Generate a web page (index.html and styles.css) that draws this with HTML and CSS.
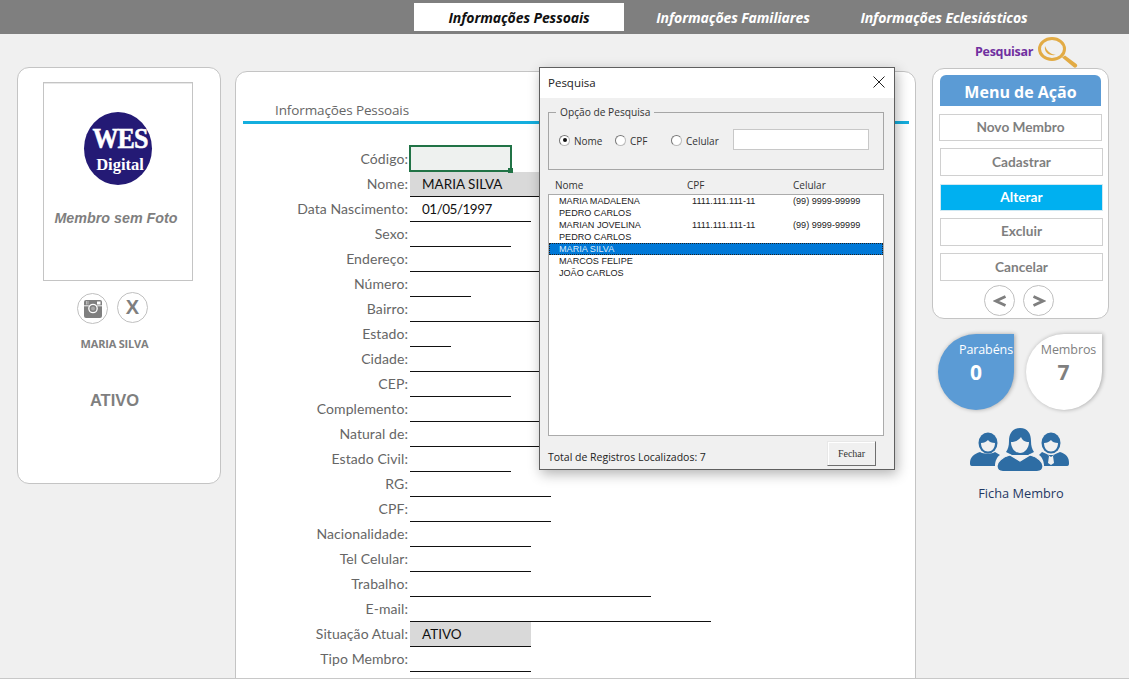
FILE: index.html
```html
<!DOCTYPE html>
<html lang="pt-BR">
<head>
<meta charset="utf-8">
<title>Cadastro de Membros</title>
<link rel="stylesheet" href="styles.css">
</head>
<body>
<div class="app">
  <nav class="topbar">
    <a class="tab tab-a active">Informações Pessoais</a>
    <a class="tab tab-b">Informações Familiares</a>
    <a class="tab tab-c">Informações Eclesiásticos</a>
  </nav>
  <main class="content">
    <aside class="profile card">
      <div class="photo">
        <div class="logo"><span class="logo-wes">WES</span><span class="logo-digital">Digital</span></div>
        <div class="nophoto">Membro sem Foto</div>
      </div>
      <div class="photo-actions">
        <button class="circle"><svg width="20" height="20" viewBox="0 0 20 20"><rect x="1" y="1" width="18" height="18" rx="2" fill="#7f7f7f"/><path d="M1 6.800h4.800M14.200 6.800H19" stroke="#fff" stroke-width=".9"/><rect x="14" y="2.500" width="3.500" height="3" fill="#fff"/><path d="M3.500 2v3.500M5 2v3.500" stroke="#fff" stroke-width=".5"/><circle cx="10" cy="9.500" r="4.200" fill="#7f7f7f" stroke="#fff" stroke-width="1.300"/><circle cx="10" cy="9.500" r="2" fill="#a8a8a8"/></svg></button>
        <button class="circle circle-x">X</button>
      </div>
      <div class="pname">MARIA SILVA</div>
      <div class="pstatus">ATIVO</div>
    </aside>

    <section class="sheet card">
      <h2 class="sheet-title">Informações Pessoais</h2>
      <div class="form">
        <div class="row"><span class="lab">Código:</span><span class="val selected"></span></div>
        <div class="row"><span class="lab">Nome:</span><span class="val wl fill">MARIA SILVA</span></div>
        <div class="row"><span class="lab">Data Nascimento:</span><span class="val w121 date">01/05/1997</span></div>
        <div class="row"><span class="lab">Sexo:</span><span class="val w101"></span></div>
        <div class="row"><span class="lab">Endereço:</span><span class="val wl"></span></div>
        <div class="row"><span class="lab">Número:</span><span class="val w61"></span></div>
        <div class="row"><span class="lab">Bairro:</span><span class="val wl"></span></div>
        <div class="row"><span class="lab">Estado:</span><span class="val w41"></span></div>
        <div class="row"><span class="lab">Cidade:</span><span class="val wl"></span></div>
        <div class="row"><span class="lab">CEP:</span><span class="val w101"></span></div>
        <div class="row"><span class="lab">Complemento:</span><span class="val wl"></span></div>
        <div class="row"><span class="lab">Natural de:</span><span class="val wl"></span></div>
        <div class="row"><span class="lab">Estado Civil:</span><span class="val w101"></span></div>
        <div class="row"><span class="lab">RG:</span><span class="val w141"></span></div>
        <div class="row"><span class="lab">CPF:</span><span class="val w141"></span></div>
        <div class="row"><span class="lab">Nacionalidade:</span><span class="val w121"></span></div>
        <div class="row"><span class="lab">Tel Celular:</span><span class="val w121"></span></div>
        <div class="row"><span class="lab">Trabalho:</span><span class="val w241"></span></div>
        <div class="row"><span class="lab">E-mail:</span><span class="val w301"></span></div>
        <div class="row"><span class="lab">Situação Atual:</span><span class="val w121 fill">ATIVO</span></div>
        <div class="row"><span class="lab">Tipo Membro:</span><span class="val w121"></span></div>
      </div>
    </section>

    <aside class="side">
      <div class="search">
        <span class="search-label">Pesquisar</span>
        <svg width="40" height="32" viewBox="0 0 40 32"><ellipse cx="14" cy="13" rx="12.500" ry="10.500" fill="none" stroke="#e2ab45" stroke-width="3"/><path d="M7 10c-1 6 3 10 11 9-6-1-9-4-11-9z" fill="#e2ab45"/><path d="M24 21.500l3-2 11.500 8.500a2 2 0 0 1-3 3z" fill="#e2ab45"/></svg>
      </div>
      <div class="menu card">
        <div class="menu-head">Menu de Ação</div>
        <button class="mbtn mbtn-first">Novo Membro</button>
        <button class="mbtn mbtn-tall">Cadastrar</button>
        <button class="mbtn mbtn-on">Alterar</button>
        <button class="mbtn mbtn-tall mbtn-up">Excluir</button>
        <button class="mbtn mbtn-tall">Cancelar</button>
        <div class="nav">
          <button class="circle"><svg width="14" height="12" viewBox="0 0 14 12"><path d="M12.500 1.500 3 6l9.500 4.500" fill="none" stroke="#7f7f7f" stroke-width="2.800"/></svg></button>
          <button class="circle"><svg width="14" height="12" viewBox="0 0 14 12"><path d="M1.500 1.500 11 6l-9.500 4.500" fill="none" stroke="#7f7f7f" stroke-width="2.800"/></svg></button>
        </div>
      </div>
      <div class="bubbles">
        <div class="bubble bubble-blue"><span class="b-label">Parabéns</span><span class="b-num">0</span></div>
        <div class="bubble bubble-white"><span class="b-label">Membros</span><span class="b-num">7</span></div>
      </div>
      <div class="people">
        <svg width="100" height="44" viewBox="0 0 100 44">
          <g fill="#2e6da4">
            <ellipse cx="18" cy="15" rx="9.500" ry="10.500"/>
            <path fill="#f0f0f0" d="M11 15c3 0 5-1 7-3 1 2 4 3 7 3 0 5-3 8.500-7 8.500s-7-3.500-7-8.500z"/>
            <path d="M2 38c-2 0-2-2-2-3 0-6 4-9 10-11 3 2 12 2 15 0l5 3c-3 2-5 6-5 11z"/>
            <ellipse cx="81" cy="15" rx="9.500" ry="10.500"/>
            <path fill="#f0f0f0" d="M74 15c3 0 5-1 7-3 1 2 4 3 7 3 0 5-3 8.500-7 8.500s-7-3.500-7-8.500z"/>
            <path d="M72 24l7 3 2 0 2 0 7-3c6 2 9 5 9 11 0 1 0 3-2 3H74c0-5-2-9-5-11z"/>
            <path fill="#f0f0f0" d="M76 25.500l5 3.500 5-3.500-3 2.500 1 7-3 2-3-2 1-7z"/>
            <path d="M50 0c8 0 11 6 11 13 0 5 1 8 3 11l-6 3H42l-6-3c2-3 3-6 3-11 0-7 3-13 11-13z"/>
            <path fill="#f0f0f0" d="M41 14c4 0 8-2 10-5 1 3 4 5 8 5 0 6-4 11-9 11s-9-5-9-11z"/>
            <path stroke="#f0f0f0" stroke-width="1.200" d="M40 27l10 6 10-6c8 2 13 7 13 11 0 3-2 5.500-6 5.500H33c-4 0-6-2.500-6-5.500 0-4 5-9 13-11z"/>
          </g>
        </svg>
        <span class="people-label">Ficha Membro</span>
      </div>
    </aside>
  </main>

  <div class="dialog">
    <header class="dlg-title">
      <span>Pesquisa</span>
      <svg width="12" height="12" viewBox="0 0 12 12"><path d="M.5.5l11 11M11.500.5l-11 11" stroke="#222" stroke-width="1" fill="none"/></svg>
    </header>
    <div class="dlg-body">
      <fieldset class="group">
        <legend>Opção de Pesquisa</legend>
        <div class="opts">
          <span class="opt opt-nome"><i class="radio on"></i>Nome</span>
          <span class="opt opt-cpf"><i class="radio"></i>CPF</span>
          <span class="opt opt-cel"><i class="radio"></i>Celular</span>
          <span class="textbox"></span>
        </div>
      </fieldset>
      <div class="list-head"><span class="c1">Nome</span><span class="c2">CPF</span><span class="c3">Celular</span></div>
      <div class="list">
        <div class="item"><span class="i1">MARIA MADALENA</span><span class="i2">1111.111.111-11</span><span>(99) 9999-99999</span></div>
        <div class="item"><span class="i1">PEDRO CARLOS</span></div>
        <div class="item"><span class="i1">MARIAN JOVELINA</span><span class="i2">1111.111.111-11</span><span>(99) 9999-99999</span></div>
        <div class="item"><span class="i1">PEDRO CARLOS</span></div>
        <div class="item sel"><span class="i1">MARIA SILVA</span></div>
        <div class="item"><span class="i1">MARCOS FELIPE</span></div>
        <div class="item"><span class="i1">JOÃO CARLOS</span></div>
      </div>
      <footer class="dlg-foot">
        <span class="total">Total de Registros Localizados: 7</span>
        <button class="fechar">Fechar</button>
      </footer>
    </div>
  </div>
</div>
</body>
</html>
```

FILE: styles.css
```css
* { box-sizing: border-box; }
html, body { margin: 0; padding: 0; height: 681px; overflow: hidden; background: #fff; }
button { font: inherit; padding: 0; cursor: default; }

.app { position: relative; height: 679px; background: #f0f0f0; border-bottom: 1px solid #c8c8c8; overflow: hidden; font-family: "Lato", "Liberation Sans", sans-serif; }

.topbar { height: 34px; background: #7f7f7f; display: flex; align-items: center; padding-left: 414px; }
.tab { height: 28px; padding-top: 1px; display: flex; align-items: center; justify-content: center; font: italic 700 14px "Open Sans", sans-serif; color: #fff; letter-spacing: -.1px; }
.tab-a { width: 210px; }
.tab-b { width: 218px; }
.tab-c { width: 204px; }
.tab.active { background: #fff; color: #111; }

.content { display: flex; align-items: flex-start; padding-left: 17px; }
.card { background: #fff; border: 1px solid #c4c4c4; border-radius: 12px; }

.profile { width: 204px; height: 417px; margin-top: 33px; display: flex; flex-direction: column; padding-top: 14px; }
.photo { width: 150px; height: 199px; margin-left: 25px; border: 1px solid #c4c4c4; box-shadow: inset 0 1px 0 #e8e8e8; display: flex; flex-direction: column; align-items: center; padding-top: 29px; }
.logo { width: 68px; height: 73px; margin-right: 1px; padding: 14px 0 0 5px; border-radius: 50%; background: #241a75; color: #fff; font-family: "Liberation Serif", serif; font-weight: 700; display: flex; flex-direction: column; align-items: center; line-height: 1; }
.logo-wes { font-size: 26px; height: 29px; letter-spacing: -1px; -webkit-text-stroke: .5px #fff; transform: scaleY(1.12); }
.logo-digital { font-size: 16.500px; margin-top: 2px; }
.nophoto { margin: 25px 4px 0 0; font: italic 700 14.300px "Liberation Sans", sans-serif; color: #7f7f7f; }

.photo-actions { display: flex; gap: 9px; margin: 12px 0 0 59px; }
.circle { width: 31px; height: 31px; border: 1px solid #c0c0c0; border-radius: 50%; background: #fff; display: flex; align-items: center; justify-content: center; color: #7f7f7f; }
.circle-x { font: 700 20px "Liberation Sans", sans-serif; margin-top: -1px; }
.pname { margin-top: 13px; width: 193px; text-align: center; font: 700 11px "Open Sans", sans-serif; color: #7f7f7f; letter-spacing: -.2px; line-height: 14px; }
.pstatus { margin-top: 40px; width: 193px; text-align: center; font: 700 16.500px "Liberation Sans", sans-serif; color: #7f7f7f; line-height: 18px; }

.sheet { width: 681px; height: 660px; margin: 37px 0 0 14px; padding: 0; position: relative; }
.sheet-title { margin: 30px 0 0 7px; padding: 0 0 0 32px; width: 666px; height: 22px; border-bottom: 3px solid #14aede; font: 400 13.500px/17px "Open Sans", sans-serif; color: #666; letter-spacing: -.12px; }
.form { margin-top: 23px; display: flex; flex-direction: column; }
.row { height: 25px; display: flex; align-items: stretch; }
.lab { width: 172px; text-align: right; font: 400 14px/23px "Lato", sans-serif; color: #666; letter-spacing: .08px; }
.val { margin-left: 2px; height: 25px; border-bottom: 1px solid #111; padding-left: 12px; font: 400 13.500px/24px "Lato", sans-serif; color: #111; }
.date { letter-spacing: -.5px; }
.selected { width: 103px; height: 27px; margin-left: 1px; margin-top: -2px; background: #eef1ef; border: 2px solid #217346; position: relative; }
.selected::after { content: ""; position: absolute; right: -3px; bottom: -3px; width: 5px; height: 5px; background: #217346; }
.fill { background: #d9d9d9; }
.wl { width: 300px; }
.w41 { width: 41px; }
.w61 { width: 61px; }
.w101 { width: 101px; }
.w121 { width: 121px; }
.w141 { width: 141px; }
.w241 { width: 241px; }
.w301 { width: 301px; }

.side { width: 177px; margin-left: 16px; display: flex; flex-direction: column; }
.search { height: 34px; display: flex; align-items: flex-start; padding: 2px 0 0 43px; gap: 5px; }
.search-label { font: 700 12.500px/32px "Open Sans", sans-serif; color: #7030a0; letter-spacing: -.3px; }
.menu { height: 251px; display: flex; flex-direction: column; align-items: flex-start; padding-top: 6px; }
.menu-head { width: 161px; height: 31px; margin-left: 7px; background: #5b9bd5; border-radius: 6px 6px 0 0; color: #fff; text-align: center; font: 700 16px/34px "Open Sans", sans-serif; }
.mbtn { width: 163px; height: 28px; margin-left: 7px; background: #fff; border: 1px solid #d0d0d0; color: #7f7f7f; font: 700 13.700px "Lato", sans-serif; }
.mbtn-first { margin-left: 6px; margin-top: 8px; height: 27px; padding-bottom: 2px; }
.mbtn-tall { margin-top: 7px; padding-bottom: 2px; }
.mbtn-tall.mbtn-up { padding-bottom: 3px; }
.mbtn-on { background: #00b0f0; border-color: #d0e8f2; color: #fff; margin-top: 8px; height: 27px; padding-bottom: 2px; }
.nav { display: flex; gap: 8px; margin: 4px 0 0 51px; }

.bubbles { display: flex; gap: 12px; margin: 15px 0 0 6px; }
.bubble { width: 76px; height: 76px; border-radius: 50% 0 50% 50%; display: flex; flex-direction: column; align-items: center; box-shadow: 1px 0 4px rgba(0,0,0,.3); padding-top: 8px; }
.bubble-blue { background: #5b9bd5; color: #fff; }
.bubble-white { background: #fff; color: #7f7f7f; }
.b-label { font: 400 12.500px/16px "Open Sans", sans-serif; white-space: nowrap; letter-spacing: -.1px; }
.bubble-blue .b-label { padding-left: 20px; }
.bubble-white .b-label { padding-left: 9px; }
.b-num { font: 700 21px/28px "Open Sans", sans-serif; }
.bubble-white .b-num { margin-left: -1px; }
.people { display: flex; flex-direction: column; align-items: center; margin: 18px 0 0 0; width: 176px; }
.people-label { margin-top: 13px; padding-left: 2px; font: 400 12.800px/16px "Open Sans", sans-serif; color: #1f3864; }

.dialog { position: absolute; left: 539px; top: 67px; width: 356px; height: 403px; background: #f0f0f0; border: 1px solid #5f5f5f; box-shadow: 2px 4px 12px rgba(0,0,0,.3); display: flex; flex-direction: column; font-family: "Open Sans", sans-serif; color: #222; }
.dlg-title { height: 30px; flex: none; background: #fff; display: flex; align-items: center; justify-content: space-between; padding: 0 9px 2px 8px; font-size: 11.500px; }
.dlg-body { flex: 1; display: flex; flex-direction: column; padding: 0 10px 0 8px; }
.group { margin: 7px 0 0; padding: 0; height: 65px; border: 1px solid #a6a6a6; }
.group legend { margin-left: 7px; padding: 0 4px; font-size: 10.200px; line-height: 14px; color: #333; }
.opts { display: flex; align-items: center; height: 21px; margin-top: 10px; font-size: 10px; line-height: 14px; color: #333; }
.opt { display: flex; align-items: flex-start; gap: 4px; padding-top: 2px; }
.opt-nome { margin-left: 10px; width: 56px; }
.opt-cpf { width: 56px; }
.opt-cel { width: 62px; }
.radio { width: 11px; height: 11px; margin-top: 1px; border-radius: 50%; background: #fff; border: 1px solid #bbb; border-top-color: #777; border-left-color: #777; flex: none; position: relative; }
.radio.on::after { content: ""; position: absolute; left: 2.500px; top: 2.500px; width: 4px; height: 4px; border-radius: 50%; background: #111; }
.textbox { width: 136px; height: 21px; background: #fff; border: 1px solid #c8c8c8; }
.list-head { display: flex; height: 18px; margin-top: 6px; font-size: 10px; line-height: 18px; color: #333; }
.c1 { margin-left: 7px; width: 132px; }
.c2 { width: 106px; }
.list { height: 242px; background: #fff; border: 1px solid #ababab; font: 400 9.100px/12px "Liberation Sans", sans-serif; color: #222; }
.item { height: 12px; display: flex; white-space: nowrap; }
.i1 { margin-left: 10px; width: 133px; }
.i2 { width: 101px; }
.item.sel { background: #0078d7; color: #dcebf9; outline: 1px dotted #222; outline-offset: -1px; }
.dlg-foot { display: flex; align-items: flex-end; justify-content: space-between; flex: 1; padding: 0 8px 3px 0; font-size: 10.500px; line-height: 14px; color: #222; }
.total { margin-bottom: 2px; }
.fechar { width: 49px; height: 25px; background: #f0f0f0; border: 1px solid; border-color: #e8e8e8 #6f6f6f #6f6f6f #e8e8e8; box-shadow: inset 1px 1px 0 #fff; font: 400 10px "Liberation Serif", serif; color: #333; }
```
